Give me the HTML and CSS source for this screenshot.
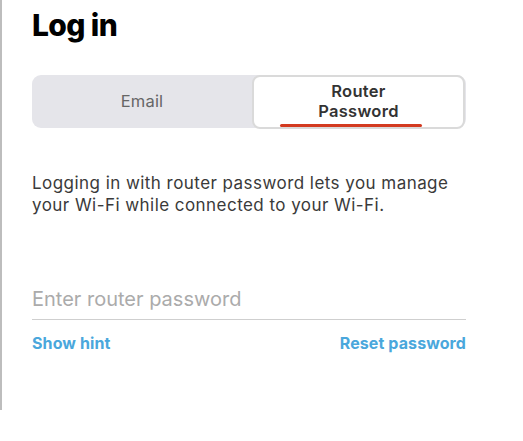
FILE: index.html
```html
<!DOCTYPE html>
<html lang="en">
<head>
<meta charset="utf-8">
<title>Log in</title>
<link rel="stylesheet" href="styles.css">
</head>
<body>
<div class="page">
  <h1 class="title">Log in</h1>
  <div class="segmented">
    <div class="segment">Email</div>
    <div class="segment segment-active">
      <span class="segment-label">Router<br>Password</span>
      <span class="segment-bar"></span>
    </div>
  </div>
  <p class="intro">Logging in with router password lets you manage your Wi-Fi while connected to your Wi-Fi.</p>
  <div class="field">
    <input class="field-input" type="password" placeholder="Enter router password">
  </div>
  <div class="links">
    <a class="link" href="#">Show hint</a>
    <a class="link" href="#">Reset password</a>
  </div>
</div>
</body>
</html>
```
FILE: styles.css
```css
* { box-sizing: border-box; }
html, body { margin: 0; padding: 0; background: #fff; }
body {
  font-family: Inter, "Noto Sans", sans-serif;
  color: #333;
  width: 523px;
  height: 441px;
  overflow: hidden;
}
.page {
  height: 410px;
  border-left: 2px solid #bdbdbd;
  padding: 7px 0 0 30px;
  width: 466px;
}
.title {
  margin: 0;
  font-size: 30px;
  line-height: 36px;
  font-weight: 800;
  color: #000;
  letter-spacing: -0.6px;
}
.segmented {
  margin-top: 32px;
  height: 53px;
  background: #e5e5ea;
  border-radius: 9px;
  display: grid;
  grid-template-columns: 220px 1fr;
  padding: 0 1px 1px 0;
}
.segment {
  display: flex;
  align-items: center;
  justify-content: center;
  font-size: 16.5px;
  letter-spacing: 0.2px;
  color: #666;
  padding-bottom: 2px;
}
.segment-active {
  flex-direction: column;
  justify-content: flex-start;
  background: #fff;
  border: 2px solid #dadada;
  border-radius: 8px;
  padding: 4px 0 0;
}
.segment-label {
  font-size: 16.5px;
  line-height: 20px;
  font-weight: 600;
  letter-spacing: 0.3px;
  color: #333;
  text-align: center;
}
.segment-bar {
  display: block;
  width: 142px;
  height: 3px;
  margin-top: 3px;
  margin-right: 16px;
  border-radius: 2px;
  background: #d33a20;
}
.intro {
  margin: 44px 0 0;
  font-size: 17px;
  line-height: 22px;
  letter-spacing: 0.45px;
  color: #3a3a3a;
}
.field {
  margin-top: 70px;
  border-bottom: 1.5px solid #cfcfcf;
}
.field-input {
  display: block;
  width: 100%;
  border: 0;
  outline: 0;
  padding: 0 0 7px;
  font-family: inherit;
  font-size: 20px;
  line-height: 26px;
  color: #333;
  background: transparent;
}
.field-input::placeholder { color: #ababab; }
.links {
  margin-top: 13px;
  display: flex;
  justify-content: space-between;
}
.link {
  font-size: 16px;
  line-height: 20px;
  font-weight: 700;
  letter-spacing: 0.1px;
  color: #4aa7dc;
  text-decoration: none;
}
```
